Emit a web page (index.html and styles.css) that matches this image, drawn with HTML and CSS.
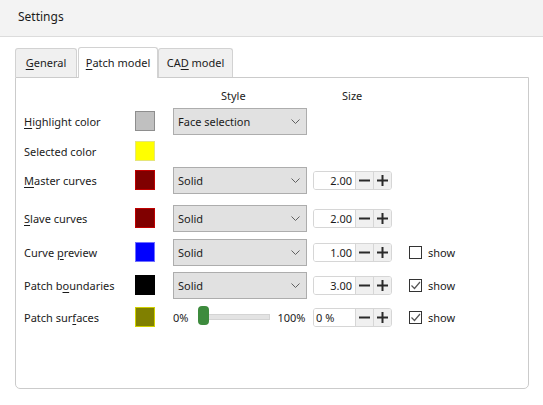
FILE: index.html
```html
<!DOCTYPE html>
<html lang="en">
<head>
    <meta charset="UTF-8">
    <title>Settings</title>
    <link rel="stylesheet" href="styles.css">
</head>
<body>

    <!-- Title bar -->
    <div class="titlebar">Settings</div>

    <div class="content">
        <div class="tabs">
            <div class="tab tab-general"><u>G</u>eneral</div>
            <div class="tab tab-patch active"><u>P</u>atch model</div>
            <div class="tab tab-cad">CA<u>D</u> model</div>
        </div>

        <div class="panel">
            <div class="grid">
                <!-- header -->
                <div></div>
                <div></div>
                <div class="head head-style">Style</div>
                <div class="head head-size">Size</div>
                <div></div>

                <!-- Highlight color -->
                <div class="label"><u>H</u>ighlight color</div>
                <div class="swatch" style="background:#c0c0c0;border-color:#8e8e8e"></div>
                <div class="select">Face selection <svg class="chev" width="9" height="5"><polyline points="0.5,0.5 4.5,4.5 8.5,0.5"/></svg></div>
                <div></div>
                <div></div>

                <!-- Selected color -->
                <div class="label">Selected color</div>
                <div class="swatch" style="background:#ffff00;border-color:#e5e57a"></div>
                <div></div>
                <div></div>
                <div></div>

                <!-- Master curves -->
                <div class="label"><u>M</u>aster curves</div>
                <div class="swatch" style="background:#800000;border-color:#c00000"></div>
                <div class="select">Solid <svg class="chev" width="9" height="5"><polyline points="0.5,0.5 4.5,4.5 8.5,0.5"/></svg></div>
                <div class="spin">
                    <div class="spin-value">2.00</div>
                    <div class="spin-btn"><svg width="11" height="11"><line x1="0" y1="5.5" x2="11" y2="5.5"/></svg></div>
                    <div class="spin-btn"><svg width="11" height="11"><line x1="0" y1="5.5" x2="11" y2="5.5"/><line x1="5.5" y1="0" x2="5.5" y2="11"/></svg></div>
                </div>
                <div></div>

                <!-- Slave curves -->
                <div class="label"><u>S</u>lave curves</div>
                <div class="swatch" style="background:#800000;border-color:#c00000"></div>
                <div class="select">Solid <svg class="chev" width="9" height="5"><polyline points="0.5,0.5 4.5,4.5 8.5,0.5"/></svg></div>
                <div class="spin">
                    <div class="spin-value">2.00</div>
                    <div class="spin-btn"><svg width="11" height="11"><line x1="0" y1="5.5" x2="11" y2="5.5"/></svg></div>
                    <div class="spin-btn"><svg width="11" height="11"><line x1="0" y1="5.5" x2="11" y2="5.5"/><line x1="5.5" y1="0" x2="5.5" y2="11"/></svg></div>
                </div>
                <div></div>

                <!-- Curve preview -->
                <div class="label">Curve <u>p</u>review</div>
                <div class="swatch" style="background:#0000ff;border-color:#7070ff"></div>
                <div class="select">Solid <svg class="chev" width="9" height="5"><polyline points="0.5,0.5 4.5,4.5 8.5,0.5"/></svg></div>
                <div class="spin">
                    <div class="spin-value">1.00</div>
                    <div class="spin-btn"><svg width="11" height="11"><line x1="0" y1="5.5" x2="11" y2="5.5"/></svg></div>
                    <div class="spin-btn"><svg width="11" height="11"><line x1="0" y1="5.5" x2="11" y2="5.5"/><line x1="5.5" y1="0" x2="5.5" y2="11"/></svg></div>
                </div>
                <div class="check-row"><span class="check"></span>show</div>

                <!-- Patch boundaries -->
                <div class="label">Patch b<u>o</u>undaries</div>
                <div class="swatch" style="background:#000000;border-color:#000000"></div>
                <div class="select">Solid <svg class="chev" width="9" height="5"><polyline points="0.5,0.5 4.5,4.5 8.5,0.5"/></svg></div>
                <div class="spin">
                    <div class="spin-value">3.00</div>
                    <div class="spin-btn"><svg width="11" height="11"><line x1="0" y1="5.5" x2="11" y2="5.5"/></svg></div>
                    <div class="spin-btn"><svg width="11" height="11"><line x1="0" y1="5.5" x2="11" y2="5.5"/><line x1="5.5" y1="0" x2="5.5" y2="11"/></svg></div>
                </div>
                <div class="check-row"><span class="check"><svg width="11" height="11"><polyline points="1.5,5.5 4.5,8.5 10,2"/></svg></span>show</div>

                <!-- Patch surfaces -->
                <div class="label">Patch sur<u>f</u>aces</div>
                <div class="swatch" style="background:#808000;border-color:#d0d000"></div>
                <div class="slider">
                    <span>0%</span>
                    <div class="track"><div class="thumb"></div></div>
                    <span>100%</span>
                </div>
                <div class="spin">
                    <div class="spin-value left">0 %</div>
                    <div class="spin-btn"><svg width="11" height="11"><line x1="0" y1="5.5" x2="11" y2="5.5"/></svg></div>
                    <div class="spin-btn"><svg width="11" height="11"><line x1="0" y1="5.5" x2="11" y2="5.5"/><line x1="5.5" y1="0" x2="5.5" y2="11"/></svg></div>
                </div>
                <div class="check-row"><span class="check"><svg width="11" height="11"><polyline points="1.5,5.5 4.5,8.5 10,2"/></svg></span>show</div>
            </div>
        </div>
    </div>

</body>
</html>
```

FILE: styles.css
```css
body {
    margin: 0;
    padding: 0;
    background: #ffffff;
    font-family: "Noto Sans", Arial, sans-serif;
    font-size: 11px;
    color: #1b1b1b;
}

u {
    text-decoration: underline;
    text-underline-offset: 2px;
}

.titlebar {
    height: 36px;
    line-height: 34px;
    padding-left: 18px;
    background: #f3f3f3;
    border-bottom: 1px solid #dcdcdc;
    font-size: 12px;
}

.content {
    padding: 10px 14px 0 15px;
}

/* tabs */
.tabs {
    display: flex;
    align-items: flex-end;
    height: 30px;
}

.tab {
    box-sizing: border-box;
    height: 29px;
    line-height: 28px;
    text-align: center;
    background: #f0f0f0;
    border: 1px solid #d2d2d2;
    border-bottom: none;
    border-radius: 3px 3px 0 0;
}

.tab-general {
    width: 62px;
    margin-right: 1px;
}

.tab-patch {
    width: 80px;
}

.tab-cad {
    width: 75px;
}

.tab.active {
    height: 31px;
    line-height: 30px;
    background: #ffffff;
    position: relative;
    top: 1px;
    z-index: 1;
}

.panel {
    box-sizing: border-box;
    height: 312px;
    border: 1px solid #cbcbcb;
    border-radius: 0 0 5px 5px;
    padding: 7px 0 0 8px;
}

/* grid of settings */
.grid {
    display: grid;
    grid-template-columns: 111px 38px 140px 96px 1fr;
    grid-template-rows: 20px 32px 28px 30px 46px 22px 44px 20px;
    align-items: center;
    justify-items: start;
}

.head-style {
    padding-left: 48px;
}

.head-size {
    padding-left: 29px;
}

.swatch {
    box-sizing: border-box;
    width: 20px;
    height: 20px;
    border: 1px solid #888;
}

.select {
    box-sizing: border-box;
    width: 134px;
    height: 27px;
    display: flex;
    align-items: center;
    justify-content: space-between;
    padding: 0 6px 0 4px;
    background: #e1e1e1;
    border: 1px solid #adadad;
}

.chev polyline {
    fill: none;
    stroke: #606060;
    stroke-width: 1;
}

.spin {
    box-sizing: border-box;
    width: 79px;
    height: 19px;
    display: flex;
    border: 1px solid #d6d6d6;
    border-radius: 3px;
    overflow: hidden;
}

.spin-value {
    flex: 1;
    text-align: right;
    line-height: 17px;
    padding-right: 3px;
    background: #ffffff;
}

.spin-value.left {
    text-align: left;
    padding-left: 2px;
}

.spin-btn {
    width: 17px;
    display: flex;
    align-items: center;
    justify-content: center;
    background: #f0f0f0;
    border-left: 1px solid #d6d6d6;
}

.spin-btn svg line {
    stroke: #2a2a2a;
    stroke-width: 2;
}

.check-row {
    display: flex;
    align-items: center;
    gap: 6px;
}

.check {
    box-sizing: border-box;
    width: 13px;
    height: 13px;
    border: 1px solid #333;
    display: flex;
    align-items: center;
    justify-content: center;
}

.check polyline {
    fill: none;
    stroke: #555;
    stroke-width: 1.2;
}

/* transparency slider */
.slider {
    width: 134px;
    display: flex;
    align-items: center;
}

.track {
    position: relative;
    width: 70px;
    height: 4px;
    margin: 0 7px 0 10px;
    background: #e3e3e3;
    border: 1px solid #d4d4d4;
}

.thumb {
    position: absolute;
    left: -1px;
    top: -9px;
    width: 11px;
    height: 19px;
    border-radius: 4px;
    background: #3d8b3d;
}
```
